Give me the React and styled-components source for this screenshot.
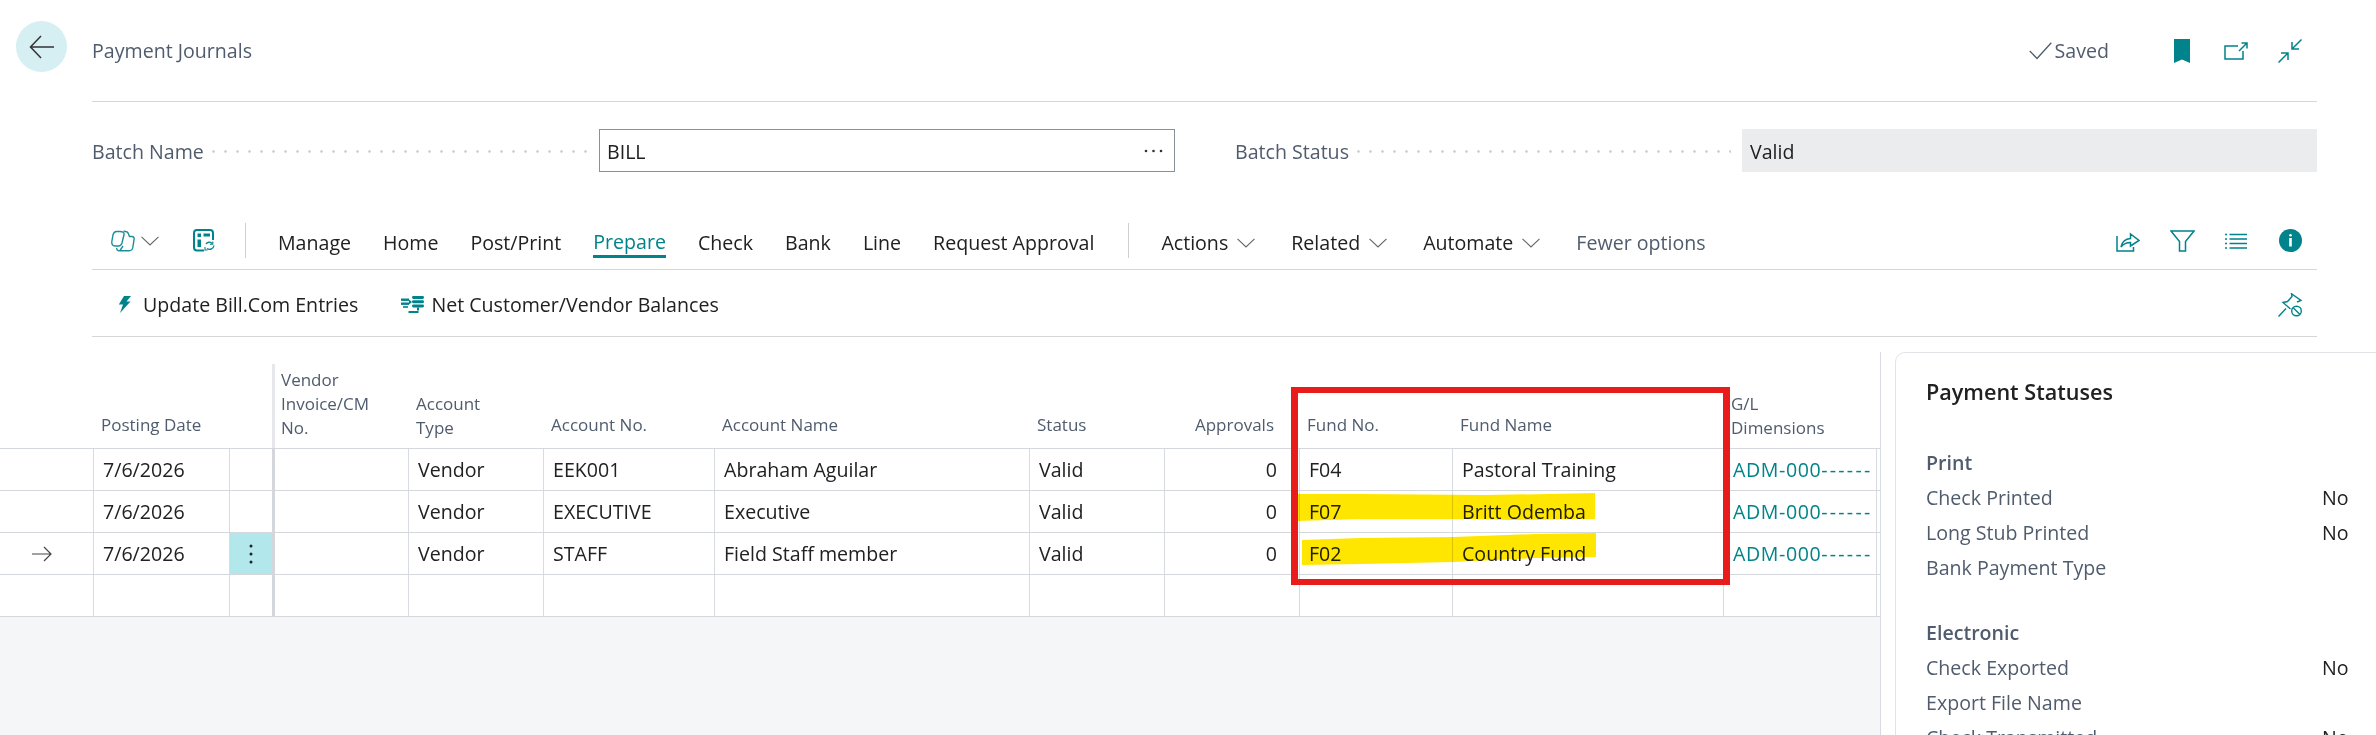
import React from "react";
import styled, { createGlobalStyle } from "styled-components";

const TEAL = "#00838a";

const GlobalStyle = createGlobalStyle`
  * {
    box-sizing: border-box;
  }

  body {
    margin: 0;
    background: #fff;
    font-family: "Open Sans", "Noto Sans", sans-serif;
    color: #212121;
  }
`;

const Page = styled.div`
  position: relative;
  width: 2376px;
  height: 735px;
  overflow: hidden;
  background: #fff;
`;

const Content = styled.div`
  padding: 0 59px 0 92px;
`;

const HeaderBar = styled.header`
  display: flex;
  align-items: center;
  height: 102px;
  border-bottom: 1px solid #d6d6d6;
`;

const BackButton = styled.button`
  display: flex;
  align-items: center;
  justify-content: center;
  flex: none;
  width: 51px;
  height: 51px;
  margin: 0 25px 8px -76px;
  padding: 0;
  border: 0;
  border-radius: 50%;
  background: #d5eff2;
`;

const PageTitle = styled.h1`
  flex: 1;
  margin: 0;
  font-size: 19.6px;
  font-weight: 400;
  color: #505c6d;
`;

const SavedState = styled.span`
  display: flex;
  align-items: center;
  gap: 3px;
  margin-right: 46px;
  font-size: 19.6px;
  color: #505c6d;
`;

const IconSlot = styled.span`
  display: flex;
  align-items: center;
  justify-content: center;
  flex: none;
  width: 54px;
`;

const FieldRow = styled.div`
  display: grid;
  grid-template-columns: 1143px 1fr;
  margin-top: 27px;
`;

const Field = styled.div`
  display: grid;
  grid-template-columns: 507px 1fr;
  height: 43px;
  align-items: center;
  width: ${(p) => p.$width}px;
`;

const FieldLabel = styled.div`
  display: flex;
  align-items: center;
  gap: 8px;
  padding: 1px 11px 0 0;
  font-size: 19.6px;
  color: #505c6d;
  white-space: nowrap;
`;

const Leader = styled.span`
  flex: 1;
  height: 3px;
  background: radial-gradient(circle at 1.5px 1.5px, #d2d2d2 1.2px, transparent 1.5px) repeat-x;
  background-size: 12px 3px;
`;

const InputBox = styled.div`
  display: flex;
  align-items: center;
  justify-content: space-between;
  height: 43px;
  padding: 1px 11px 0 7px;
  border: 1px solid #8a9099;
  font-size: 19.6px;
`;

const ReadOnlyBox = styled.div`
  display: flex;
  align-items: center;
  height: 43px;
  padding: 1px 0 0 8px;
  background: #ebecee;
  font-size: 19.6px;
`;

const NavBar = styled.nav`
  display: flex;
  align-items: flex-start;
  height: 98px;
  padding-top: 51px;
  border-bottom: 1px solid #d6d6d6;
`;

const CopilotGroup = styled.div`
  display: flex;
  align-items: center;
  gap: 6px;
  height: 35px;
  margin-left: 19px;
`;

const PageIconSlot = styled.div`
  display: flex;
  align-items: center;
  height: 35px;
  margin: 0 30px 0 34px;
`;

const Separator = styled.span`
  flex: none;
  width: 1px;
  height: 35px;
  margin-right: ${(p) => p.$after}px;
  margin-left: ${(p) => p.$before ?? 0}px;
  background: #cfcfcf;
`;

const NavItem = styled.a`
  display: flex;
  align-items: center;
  gap: 9px;
  height: 35px;
  margin: 0 ${(p) => (p.$wide ? "18px" : "16px")};
  padding-top: ${(p) => (p.$active ? "5px" : "4px")};
  font-size: 19.6px;
  white-space: nowrap;
  color: ${(p) => (p.$active ? TEAL : p.$muted ? "#505c6d" : "#212121")};
  border-bottom: ${(p) => (p.$active ? `3px solid ${TEAL}` : "0")};
`;

const NavRight = styled.div`
  display: flex;
  align-items: center;
  height: 35px;
  margin-left: auto;
`;

const ActionBar = styled.div`
  display: flex;
  align-items: center;
  height: 67px;
  padding: 3px 0 0 26px;
  border-bottom: 1px solid #d6d6d6;
`;

const ActionItem = styled.a`
  display: flex;
  align-items: center;
  gap: ${(p) => p.$gap}px;
  margin-right: 43px;
  font-size: 19.6px;
  white-space: nowrap;
`;

const PinSlot = styled.div`
  margin-left: auto;
`;

const MainRow = styled.div`
  display: flex;
  align-items: stretch;
  height: 383px;
  margin-top: 15px;
`;

const TableSection = styled.section`
  display: flex;
  flex-direction: column;
  flex: none;
  width: 1881px;
  border-right: 1px solid #d8dbe0;
`;

const GRID = "93px 136px 43px 136px 135px 171px 315px 135px 135px 153px 271px 153px 4px";

const HeadRow = styled.div`
  display: grid;
  grid-template-columns: ${GRID};
  height: 97px;
  border-bottom: 1px solid #d4d7dc;
`;

const HeadCell = styled.div`
  display: flex;
  align-items: flex-end;
  justify-content: ${(p) => (p.$right ? "flex-end" : "flex-start")};
  margin-top: ${(p) => (p.$frozen ? "12px" : "0")};
  padding: 0 ${(p) => (p.$right ? "25px" : "0")} ${(p) => (p.$single ? "11px" : "8px")} ${(p) => (p.$frozen ? "6px" : "8px")};
  border-left: ${(p) => (p.$frozen ? "3px solid #e6e8eb" : "0")};
  font-size: 17px;
  line-height: 24px;
  color: #505c6d;
`;

const BodyRow = styled.div`
  display: grid;
  grid-template-columns: ${GRID};
  height: 42px;
  border-bottom: 1px solid #d4d7dc;
`;

const Cell = styled.div`
  display: flex;
  align-items: center;
  justify-content: ${(p) => (p.$right ? "flex-end" : "flex-start")};
  padding: 0 ${(p) => (p.$right ? "22px" : "0")} 0 ${(p) => (p.$frozen ? "6px" : "9px")};
  border-left: ${(p) => (p.$frozen ? "3px solid #d3d7dc" : "1px solid #d8dbe0")};
  font-size: 19.6px;
  white-space: nowrap;
  letter-spacing: ${(p) => (p.$link ? "0.6px" : "normal")};
  color: ${(p) => (p.$link ? "#008489" : "#212121")};
`;

const DashRun = styled.span`
  letter-spacing: 2.2px;
`;

const MarkerCell = styled.div`
  display: flex;
  align-items: center;
  justify-content: center;
  padding-right: 9px;
`;

const MenuCell = styled(Cell)`
  justify-content: center;
  padding: 0;
  background: ${(p) => (p.$selected ? "#b2e8ec" : "transparent")};
`;

const GreyFill = styled.div`
  flex: 1;
  background: #f5f6f8;
`;

const FactBox = styled.aside`
  flex: none;
  width: 600px;
  height: 420px;
  margin-left: 14px;
  padding: 22px 30px;
  border: 1px solid #e2e3e6;
  border-radius: 10px;
`;

const FactTitle = styled.h2`
  margin: 0 0 36px;
  font-size: 21.6px;
  line-height: 34px;
  font-weight: 600;
  color: #212121;
`;

const FactGroup = styled.div`
  margin-bottom: 30px;
`;

const GroupTitle = styled.h3`
  margin: 0;
  font-size: 19.6px;
  line-height: 35px;
  font-weight: 600;
  color: #505c6d;
`;

const FactRow = styled.div`
  display: grid;
  grid-template-columns: 396px auto;
  font-size: 19.6px;
  line-height: 35px;
  color: #505c6d;
`;

const FactValue = styled.span`
  color: #212121;
`;

const Annotation = styled.svg`
  position: absolute;
  top: 0;
  left: 0;
  pointer-events: none;
  mix-blend-mode: multiply;
`;

const RedFrame = styled.div`
  position: absolute;
  top: 387px;
  left: 1291px;
  width: 439px;
  height: 198px;
  border: solid #e91c1c;
  border-width: 6px 7px;
  pointer-events: none;
`;

const BackArrow = () => (
  <svg width="26" height="24" viewBox="0 0 26 24" fill="none" stroke="#333" strokeWidth="1.5">
    <path d="M1.5 12H25M12 1L1.5 12L12 23" />
  </svg>
);

const Chevron = () => (
  <svg width="18" height="10" viewBox="0 0 18 10" fill="none" stroke="#666" strokeWidth="1.1">
    <path d="M0.5 0.8L9 9L17.5 0.8" />
  </svg>
);

const CheckMark = () => (
  <svg width="23" height="18" viewBox="0 0 23 18" fill="none" stroke="#505c6d" strokeWidth="1.3">
    <path d="M0.8 9L8 16.5L22.3 0.8" />
  </svg>
);

const Bookmark = () => (
  <svg width="16" height="24" viewBox="0 0 16 24" fill={TEAL}>
    <path d="M0 0H16V24L8 20.5L0 24Z" />
  </svg>
);

const OpenWindow = () => (
  <svg width="24" height="18" viewBox="0 0 24 18" fill="none" stroke={TEAL} strokeWidth="1.5">
    <path d="M14 4H1V17H19V9" />
    <path d="M15 9L23 1M17.5 1H23V6.5" />
  </svg>
);

const Collapse = () => (
  <svg width="24" height="24" viewBox="0 0 24 24" fill="none" stroke={TEAL} strokeWidth="1.5">
    <path d="M23.5 0.5L14 10M14 3V10H21" />
    <path d="M0.5 23.5L10 14M3 14H10V21" />
  </svg>
);

const CopilotIcon = () => (
  <svg width="24" height="22" viewBox="0 0 24 22" fill="none" stroke="#1a8f98" strokeWidth="1.4">
    <path d="M9 1.5H5.5C3.6 1.5 2.5 3 2 4.8L0.9 11C0.4 14 1.5 16 4 16H7.5C9.5 16 10.5 14.5 11 13L13 4.5C13.5 2.5 11.5 1.5 9 1.5Z" />
    <path d="M12.5 1.2C15 1.2 17 2 17.5 4L18.5 6.5H21C22.5 6.5 23.4 7.6 23.1 9.2L21.9 17C21.5 19.4 20 20.8 18 20.8H8.5C6.5 20.8 5.5 19.5 5.8 18" />
    <path d="M9 20.5L12 16" />
  </svg>
);

const TellMeIcon = () => (
  <svg width="22" height="23" viewBox="0 0 22 23" fill="none" stroke={TEAL} strokeWidth="1.6">
    <path d="M11 21.5H4C2 21.5 1 20.5 1 18.5V4C1 2 2 1 4 1H17C19 1 20 2 20 4V11" strokeWidth="2" />
    <path d="M4.5 4.5H8V8H4.5ZM4.5 10.5H8V18H4.5ZM10.5 4.5H17V7.5H10.5Z" fill={TEAL} stroke="none" />
    <path d="M13 15C14 13 17 12.5 19 14.5M21 16.5C20.5 19.5 17 21.5 14 19.5" strokeWidth="1.3" />
    <path d="M19.8 12.5V15.2H17M12 18V21H14.5" strokeWidth="1.1" />
  </svg>
);

const ShareIcon = () => (
  <svg width="24" height="22" viewBox="0 0 24 22" fill="none" stroke={TEAL} strokeWidth="1.5">
    <path d="M1 6V21H17.5V17" />
    <path d="M5 17C6 11.5 9 9 14.5 8.5V4L23 10.5L14.5 16V12.5C10.5 12.5 7.5 13.8 5 17Z" />
  </svg>
);

const FilterIcon = () => (
  <svg width="25" height="22" viewBox="0 0 25 22" fill="none" stroke={TEAL} strokeWidth="1.5">
    <path d="M1 1H24L15.5 11.5V21H9.5V11.5Z" />
  </svg>
);

const ListIcon = () => (
  <svg width="22" height="16" viewBox="0 0 22 16" fill="none" stroke={TEAL} strokeWidth="1.5">
    <path d="M0 1.5H2M4.5 1.5H22M0 6H2M4.5 6H22M0 10.5H2M4.5 10.5H22M0 15H2M4.5 15H22" />
  </svg>
);

const InfoIcon = () => (
  <svg width="23" height="23" viewBox="0 0 23 23">
    <circle cx="11.5" cy="11.5" r="11.5" fill={TEAL} />
    <rect x="10.2" y="5" width="2.6" height="2.6" rx="1.3" fill="#fff" />
    <rect x="10.2" y="9" width="2.6" height="8.5" fill="#fff" />
  </svg>
);

const PinOffIcon = () => (
  <svg width="24" height="24" viewBox="0 0 24 24" fill="none" stroke={TEAL} strokeWidth="1.4">
    <path d="M0.5 23.5L8 15.5" />
    <path d="M12.5 16L5 9.5L9.5 8.5L14 3.5L13.5 0.8L23 7.5L19 9" />
    <circle cx="18.5" cy="18" r="4.8" />
    <path d="M15.2 14.8L21.8 21.2" />
  </svg>
);

const BoltIcon = () => (
  <svg width="13" height="17" viewBox="0 0 13 17" fill={TEAL}>
    <path d="M6 0H13L8.5 5.5H12.5L2 17L5 8.5H0.8Z" />
  </svg>
);

const BalancesIcon = () => (
  <svg width="23" height="17" viewBox="0 0 23 17" fill={TEAL}>
    <rect x="0" y="2.5" width="8" height="2.4" />
    <rect x="0" y="6.5" width="8" height="2.4" />
    <rect x="2" y="10.2" width="5" height="1.6" />
    <path d="M8 3.5L11 6L8 8.5Z" />
    <rect x="11" y="0" width="12" height="3" rx="1.4" />
    <rect x="11" y="4.2" width="12" height="3" rx="1.4" />
    <rect x="11" y="8.4" width="12" height="3" rx="1.4" />
    <path d="M10 11.5L13 14.5H16V11.5H18V14.5H13Z" />
    <rect x="7.5" y="15" width="10" height="2" />
  </svg>
);

const DotsIcon = () => (
  <svg width="4" height="20" viewBox="0 0 4 20" fill="#222">
    <circle cx="2" cy="2" r="1.5" />
    <circle cx="2" cy="10" r="1.5" />
    <circle cx="2" cy="18" r="1.5" />
  </svg>
);

const RowArrow = () => (
  <svg width="20" height="16" viewBox="0 0 20 16" fill="none" stroke="#444" strokeWidth="1.2">
    <path d="M0 8H19M12 1L19 8L12 15" />
  </svg>
);

const EllipsisIcon = () => (
  <svg width="19" height="4" viewBox="0 0 19 4" fill="#333">
    <circle cx="2" cy="2" r="1.3" />
    <circle cx="9.5" cy="2" r="1.3" />
    <circle cx="17" cy="2" r="1.3" />
  </svg>
);

const tabs = [
  { name: "Manage" },
  { name: "Home" },
  { name: "Post/Print" },
  { name: "Prepare", active: true },
  { name: "Check" },
  { name: "Bank" },
  { name: "Line" },
  { name: "Request Approval" },
];

const rows = [
  { account: "EEK001", accountName: "Abraham Aguilar", fund: "F04", fundName: "Pastoral Training" },
  { account: "EXECUTIVE", accountName: "Executive", fund: "F07", fundName: "Britt Odemba" },
  { account: "STAFF", accountName: "Field Staff member", fund: "F02", fundName: "Country Fund", selected: true },
];

const headers = [
  { text: "" },
  { text: "Posting Date", single: true },
  { text: "" },
  { text: <>Vendor<br />Invoice/CM<br />No.</>, frozen: true },
  { text: <>Account<br />Type</> },
  { text: "Account No.", single: true },
  { text: "Account Name", single: true },
  { text: "Status", single: true },
  { text: "Approvals", single: true, right: true },
  { text: "Fund No.", single: true },
  { text: "Fund Name", single: true },
  { text: <>G/L<br />Dimensions</> },
  { text: "" },
];

const factGroups = [
  {
    title: "Print",
    items: [["Check Printed", "No"], ["Long Stub Printed", "No"], ["Bank Payment Type", ""]],
  },
  {
    title: "Electronic",
    items: [["Check Exported", "No"], ["Export File Name", ""], ["Check Transmitted", "No"]],
  },
];

export default function App() {
  return (
    <Page>
      <GlobalStyle />
      <Content>
        <HeaderBar>
          <BackButton aria-label="Back">
            <BackArrow />
          </BackButton>
          <PageTitle>Payment Journals</PageTitle>
          <SavedState>
            <CheckMark />
            Saved
          </SavedState>
          <IconSlot><Bookmark /></IconSlot>
          <IconSlot><OpenWindow /></IconSlot>
          <IconSlot><Collapse /></IconSlot>
        </HeaderBar>

        <FieldRow>
          <Field $width={1083}>
            <FieldLabel>Batch Name<Leader /></FieldLabel>
            <InputBox>
              BILL
              <EllipsisIcon />
            </InputBox>
          </Field>
          <Field $width={1082}>
            <FieldLabel>Batch Status<Leader /></FieldLabel>
            <ReadOnlyBox>Valid</ReadOnlyBox>
          </Field>
        </FieldRow>

        <NavBar>
          <CopilotGroup>
            <CopilotIcon />
            <Chevron />
          </CopilotGroup>
          <PageIconSlot>
            <TellMeIcon />
          </PageIconSlot>
          <Separator $after={16} />
          {tabs.map((tab) => (
            <NavItem key={tab.name} $active={tab.active}>{tab.name}</NavItem>
          ))}
          <Separator $before={18} $after={14} />
          <NavItem $wide>Actions <Chevron /></NavItem>
          <NavItem $wide>Related <Chevron /></NavItem>
          <NavItem $wide>Automate <Chevron /></NavItem>
          <NavItem $wide $muted>Fewer options</NavItem>
          <NavRight>
            <IconSlot><ShareIcon /></IconSlot>
            <IconSlot><FilterIcon /></IconSlot>
            <IconSlot><ListIcon /></IconSlot>
            <IconSlot><InfoIcon /></IconSlot>
          </NavRight>
        </NavBar>

        <ActionBar>
          <ActionItem $gap={12}><BoltIcon />Update Bill.Com Entries</ActionItem>
          <ActionItem $gap={7}><BalancesIcon />Net Customer/Vendor Balances</ActionItem>
          <PinSlot>
            <IconSlot><PinOffIcon /></IconSlot>
          </PinSlot>
        </ActionBar>
      </Content>

      <MainRow>
        <TableSection>
          <HeadRow>
            {headers.map((h, i) => (
              <HeadCell key={i} $frozen={h.frozen} $right={h.right} $single={h.single}>
                <span>{h.text}</span>
              </HeadCell>
            ))}
          </HeadRow>
          {[...rows, {}].map((row, i) => (
            <BodyRow key={i}>
              <MarkerCell>{row.selected && <RowArrow />}</MarkerCell>
              <Cell>{row.account && "7/6/2026"}</Cell>
              <MenuCell $selected={row.selected}>{row.selected && <DotsIcon />}</MenuCell>
              <Cell $frozen />
              <Cell>{row.account && "Vendor"}</Cell>
              <Cell>{row.account}</Cell>
              <Cell>{row.accountName}</Cell>
              <Cell>{row.account && "Valid"}</Cell>
              <Cell $right>{row.account && "0"}</Cell>
              <Cell>{row.fund}</Cell>
              <Cell>{row.fundName}</Cell>
              <Cell $link>{row.account && <span>ADM-000<DashRun>------</DashRun></span>}</Cell>
              <Cell />
            </BodyRow>
          ))}
          <GreyFill />
        </TableSection>

        <FactBox>
          <FactTitle>Payment Statuses</FactTitle>
          {factGroups.map((group) => (
            <FactGroup key={group.title}>
              <GroupTitle>{group.title}</GroupTitle>
              {group.items.map(([label, value]) => (
                <FactRow key={label}>
                  <span>{label}</span>
                  <FactValue>{value}</FactValue>
                </FactRow>
              ))}
            </FactGroup>
          ))}
        </FactBox>
      </MainRow>

      <Annotation width="2376" height="735" viewBox="0 0 2376 735">
        <path
          fill="#ffe600"
          d="M1297 494L1361 494L1484 495L1550 494L1595 493L1595 519L1514 520L1458 519L1361 519L1297 521Z"
        />
        <path
          fill="#ffe600"
          d="M1302 540L1361 538L1453 537L1535 534L1596 533L1596 557L1535 558L1453 562L1361 564L1302 565Z"
        />
      </Annotation>
      <RedFrame />
    </Page>
  );
}
